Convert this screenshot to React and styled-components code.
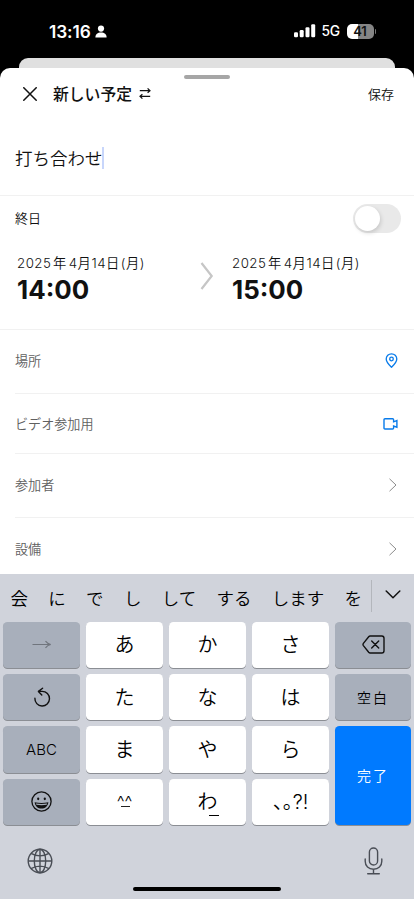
import React, { useState } from "react";
import styled, { createGlobalStyle } from "styled-components";

const candidates = ["会", "に", "で", "し", "して", "する", "します", "を"];

function App() {
  const [allDay, setAllDay] = useState(false);

  return (
    <Screen lang="ja">
      <GlobalStyle />
      <StatusBar>
        <Clock>13:16</Clock>
        <PersonIcon />
        <StatusRight>
          <SignalIcon />
          <Network>5G</Network>
          <Battery>
            <span>41</span>
          </Battery>
          <BatteryTip />
        </StatusRight>
      </StatusBar>
      <BackSheet />
      <Sheet>
        <Grabber />
        <Header>
          <CloseIcon />
          <Title>新しい予定</Title>
          <SwapIcon />
          <SaveBtn>保存</SaveBtn>
        </Header>
        <Subject>
          <span>打ち合わせ</span>
          <Caret />
        </Subject>
        <AllDay>
          <span>終日</span>
          <Toggle $on={allDay} onClick={() => setAllDay(!allDay)} />
        </AllDay>
        <Period>
          <DateTime date="2025年4月14日(月)" time="14:00" />
          <PeriodArrow />
          <DateTime date="2025年4月14日(月)" time="15:00" />
        </Period>
        <Field $height={64}>
          <span>場所</span>
          <PinIcon />
        </Field>
        <Field $height={60} $center>
          <span>ビデオ参加用</span>
          <VideoIcon />
        </Field>
        <Field $height={64}>
          <span>参加者</span>
          <ChevronIcon />
        </Field>
        <Field $height={64}>
          <span>設備</span>
          <ChevronIcon />
        </Field>
      </Sheet>
      <Keyboard>
        <CandidateBar>
          <Candidates>
            {candidates.map((word) => (
              <Candidate key={word}>{word}</Candidate>
            ))}
          </Candidates>
          <ExpandBtn>
            <DownIcon />
          </ExpandBtn>
        </CandidateBar>
        <Keys>
          <FnKey>
            <ArrowIcon />
          </FnKey>
          <Key>あ</Key>
          <Key>か</Key>
          <Key>さ</Key>
          <FnKey>
            <DeleteIcon />
          </FnKey>
          <FnKey>
            <UndoIcon />
          </FnKey>
          <Key>た</Key>
          <Key>な</Key>
          <Key>は</Key>
          <FnKey $spacing="2px">空白</FnKey>
          <FnKey>ABC</FnKey>
          <Key>ま</Key>
          <Key>や</Key>
          <Key>ら</Key>
          <DoneKey $spacing="2px">完了</DoneKey>
          <FnKey>
            <SmileIcon />
          </FnKey>
          <Key>
            <Kaomoji>^^</Kaomoji>
          </Key>
          <Key>
            <Wa>わ</Wa>
          </Key>
          <Key>
            <Marks>、。?!</Marks>
          </Key>
        </Keys>
        <KeyboardFooter>
          <GlobeIcon />
          <MicIcon />
        </KeyboardFooter>
        <HomeIndicator />
      </Keyboard>
    </Screen>
  );
}

function DateTime({ date, time }) {
  const parts = date.split(/(年)/);
  return (
    <DateBox>
      <DateText>
        {parts[0]}
        <Year>{parts[1]}</Year>
        {parts[2].replace("(月)", "")}
        <Weekday>(月)</Weekday>
      </DateText>
      <TimeText>{time}</TimeText>
    </DateBox>
  );
}

const PersonIcon = () => (
  <svg width="12" height="13" viewBox="0 0 12 13" fill="#fff">
    <circle cx="6" cy="3.6" r="3.1" />
    <path d="M0.4 12.4C0.4 9.2 2.6 7.4 6 7.4S11.6 9.2 11.6 12.4Z" />
  </svg>
);

const SignalIcon = () => (
  <svg width="22" height="14" viewBox="0 0 22 14" fill="#fff">
    <rect x="0" y="8.3" width="4" height="5" rx="1.2" />
    <rect x="5.7" y="6" width="4" height="7.3" rx="1.2" />
    <rect x="11.5" y="3.3" width="4" height="10" rx="1.2" />
    <rect x="17.2" y="0.3" width="4" height="13" rx="1.2" />
  </svg>
);

const CloseIcon = () => (
  <svg width="14" height="14" viewBox="0 0 14 14" stroke="#111" strokeWidth="1.5">
    <path d="M0.3 0.3L13.7 13.7M13.7 0.3L0.3 13.7" />
  </svg>
);

const SwapIcon = () => (
  <svg width="12" height="11" viewBox="0 0 12 11" fill="none" stroke="#111" strokeWidth="1.2">
    <path d="M0.8 2.7H10.8M8.6 0.4L11 2.7L8.6 4.8M11.2 8.3H1.2M3.4 6.2L1 8.3L3.4 10.6" />
  </svg>
);

const PeriodArrow = () => (
  <svg width="14" height="30" viewBox="0 0 14 30" fill="none" stroke="#c6c6c6" strokeWidth="2.2">
    <path d="M1.5 2L11.7 15L1.5 28" />
  </svg>
);

const PinIcon = () => (
  <svg width="13" height="15" viewBox="0 0 13 15" fill="none" stroke="#087bea" strokeWidth="1.3">
    <path d="M6.5 14.2C4.8 12.6 1.2 9.4 1.2 6A5.3 5.2 0 0 1 11.8 6C11.8 9.4 8.2 12.6 6.5 14.2Z" />
    <circle cx="6.5" cy="6" r="1.8" />
  </svg>
);

const VideoIcon = () => (
  <svg width="15" height="12" viewBox="0 0 15 12" fill="none" stroke="#087bea" strokeWidth="1.4">
    <path d="M2 0.8H9.6Q10.6 0.8 10.6 1.8V3.8L13.9 2.6V9.2L10.6 8V10Q10.6 11 9.6 11H2Q1 11 1 10V1.8Q1 0.8 2 0.8Z" />
  </svg>
);

const ChevronIcon = () => (
  <svg width="9" height="14" viewBox="0 0 9 14" fill="none" stroke="#8c8c8c" strokeWidth="1">
    <path d="M0.5 0.8L7 7L0.5 13.2" />
  </svg>
);

const DownIcon = () => (
  <svg width="16" height="9" viewBox="0 0 16 9" fill="none" stroke="#111" strokeWidth="1.5" strokeLinecap="round" strokeLinejoin="round">
    <path d="M1.2 1L8 7.7L14.8 1" />
  </svg>
);

const ArrowIcon = () => (
  <svg width="20" height="9" viewBox="0 0 20 9" fill="none" stroke="#70757d" strokeWidth="1.2">
    <path d="M0.5 4.5H18.5M13.5 1.2Q15.5 3.8 18.7 4.5Q15.5 5.2 13.5 7.8" />
  </svg>
);

const DeleteIcon = () => (
  <svg width="23" height="19" viewBox="0 0 23 19" fill="none" stroke="#111" strokeWidth="1.4" strokeLinecap="round" strokeLinejoin="round">
    <path d="M8.1 1H19.8Q22 1 22 3.2V15.8Q22 18 19.8 18H8.1Q7.3 18 6.7 17.3L1.4 10.6Q0.6 9.5 1.4 8.4L6.7 1.7Q7.3 1 8.1 1Z" />
    <path d="M9.7 6L16.7 13M16.7 6L9.7 13" />
  </svg>
);

const UndoIcon = () => (
  <svg width="18" height="20" viewBox="0 0 18 20" fill="none" stroke="#111" strokeWidth="1.4" strokeLinecap="round" strokeLinejoin="round">
    <path d="M1.9 11.3A7.3 7.3 0 1 0 9.2 4.4H5.6M9.6 1.2L5.4 4.4L8.8 8" />
  </svg>
);

const SmileIcon = () => (
  <svg width="21" height="21" viewBox="0 0 21 21" fill="none" stroke="#111" strokeWidth="1.3">
    <circle cx="10.5" cy="10.5" r="9.6" />
    <ellipse cx="7.2" cy="7.8" rx="1.1" ry="1.4" fill="#111" stroke="none" />
    <ellipse cx="13.8" cy="7.8" rx="1.1" ry="1.4" fill="#111" stroke="none" />
    <path d="M3.6 11.3Q10.5 12.5 17.4 11.3C16.8 15.4 14 17.6 10.5 17.6S4.2 15.4 3.6 11.3Z" fill="#111" stroke="none" />
    <path d="M4.9 12.5Q10.5 13.4 16.1 12.5L15.6 13.7Q10.5 14.6 5.4 13.7Z" fill="#a8afbb" stroke="none" />
  </svg>
);

const GlobeIcon = () => (
  <svg width="26" height="26" viewBox="0 0 26 26" fill="none" stroke="#494d55" strokeWidth="1.4">
    <circle cx="13" cy="13" r="11.8" />
    <ellipse cx="13" cy="13" rx="5.7" ry="11.8" />
    <path d="M13 1.2V24.8M1.2 13H24.8M4 5.4Q13 10.4 22 5.4M4 20.6Q13 15.6 22 20.6" />
  </svg>
);

const MicIcon = () => (
  <svg width="19" height="28" viewBox="0 0 19 28" fill="none" stroke="#494d55" strokeWidth="1.4" strokeLinecap="round">
    <rect x="5.4" y="1" width="8.2" height="17" rx="4.1" />
    <path d="M1.2 12V14.2C1.2 19 4.6 22.2 9.5 22.2S17.8 19 17.8 14.2V12M9.5 22.2V26.8M3.7 26.8H15.3" />
  </svg>
);

export default App;

const GlobalStyle = createGlobalStyle`
  * {
    box-sizing: border-box;
  }
  body {
    margin: 0;
    background: #000;
    font-family: Inter, "Noto Sans CJK JP", sans-serif;
  }
  svg {
    display: block;
    flex-shrink: 0;
  }
`;

const Screen = styled.div`
  width: 414px;
  height: 899px;
  overflow: hidden;
  display: flex;
  flex-direction: column;
  background: #000;
`;

const StatusBar = styled.div`
  height: 58px;
  padding: 4px 38px 0 49px;
  display: flex;
  align-items: center;
  flex-shrink: 0;
  color: #fff;
  > svg {
    margin-left: 5px;
  }
`;

const Clock = styled.span`
  width: 41px;
  font-size: 17.3px;
  font-weight: 600;
  letter-spacing: -0.1px;
  white-space: nowrap;
`;

const StatusRight = styled.div`
  display: flex;
  align-items: center;
  margin-left: auto;
`;

const Network = styled.span`
  margin: 0 6px 0 6px;
  width: 19px;
  font-size: 13.8px;
  font-weight: 450;
  letter-spacing: -0.2px;
`;

const Battery = styled.div`
  width: 27px;
  height: 15px;
  border-radius: 5px;
  background: linear-gradient(90deg, #fff 42%, #858585 42%);
  display: flex;
  align-items: center;
  justify-content: center;
  color: #111;
  font-size: 13px;
  font-weight: 600;
`;

const BatteryTip = styled.div`
  width: 1.5px;
  height: 5px;
  margin-left: 1px;
  border-radius: 0 2px 2px 0;
  background: #777;
`;

const BackSheet = styled.div`
  height: 20px;
  margin: 0 19px -10.5px;
  flex-shrink: 0;
  border-radius: 9px 9px 0 0;
  background: #e0e0e0;
`;

const Sheet = styled.div`
  height: 506px;
  flex-shrink: 0;
  border-radius: 10px 10px 0 0;
  background: #fff;
  position: relative;
  color: #111;
  font-weight: 350;
`;

const Grabber = styled.div`
  width: 46px;
  height: 4px;
  margin: 0 auto;
  border-radius: 2px;
  background: #a6a6a6;
  position: relative;
  top: 7.5px;
`;

const Header = styled.div`
  height: 44px;
  padding: 0 20px 0 23px;
  display: flex;
  align-items: center;
`;

const Title = styled.div`
  margin: -1px 7px 0 16px;
  font-size: 15.8px;
  font-weight: 500;
`;

const SaveBtn = styled.div`
  margin: -1px 0 0 auto;
  font-size: 13px;
  font-weight: 350;
`;

const Subject = styled.div`
  height: 80.5px;
  padding: 5px 15px 0;
  display: flex;
  align-items: center;
  border-bottom: 1px solid #f1f1f1;
  font-size: 17.5px;
`;

const Caret = styled.div`
  width: 2px;
  height: 22px;
  margin-left: -0.5px;
  background: #c8d6fb;
`;

const AllDay = styled.div`
  height: 45px;
  padding: 0 13px 0 15px;
  display: flex;
  align-items: center;
  justify-content: space-between;
  font-size: 13px;
  span {
    margin-top: -2px;
  }
`;

const Toggle = styled.button`
  width: 48px;
  height: 29px;
  padding: 2px;
  border: none;
  border-radius: 15px;
  background: ${(props) => (props.$on ? "#34c759" : "#e9e9e9")};
  &::after {
    content: "";
    display: block;
    width: 25px;
    height: 25px;
    margin-left: ${(props) => (props.$on ? "19px" : "0")};
    border-radius: 50%;
    background: #fff;
    box-shadow: 1px 2px 4px rgba(0, 0, 0, 0.15);
  }
`;

const Period = styled.div`
  height: 89px;
  padding: 12px 17px 0;
  display: flex;
  border-bottom: 1px solid #f1f1f1;
  svg {
    margin: 8px 18px 0 2px;
  }
`;

const DateBox = styled.div`
  width: 181px;
  flex-shrink: 0;
`;

const DateText = styled.div`
  height: 20px;
  line-height: 21px;
  font-size: 13.3px;
  letter-spacing: 0.5px;
  white-space: nowrap;
`;

const Year = styled.span`
  margin: 0 2px 0 1.5px;
`;

const Weekday = styled.span`
  margin-left: 1px;
`;

const TimeText = styled.div`
  line-height: 34px;
  font-size: 25.9px;
  font-weight: 700;
`;

const Field = styled.div`
  height: ${(props) => props.$height}px;
  margin-left: 15px;
  padding-right: 16px;
  padding-bottom: ${(props) => (props.$center ? "0" : "1.5px")};
  display: flex;
  align-items: center;
  justify-content: space-between;
  border-bottom: 1px solid #f1f1f1;
  color: #606060;
  font-size: 13.1px;
`;

const Keyboard = styled.div`
  flex: 1;
  background: #d0d3db;
  position: relative;
`;

const CandidateBar = styled.div`
  height: 48px;
  display: flex;
  align-items: center;
`;

const Candidates = styled.div`
  width: 371px;
  padding-left: 10.5px;
  display: flex;
  gap: 20.3px;
`;

const Candidate = styled.span`
  font-size: 17.5px;
  font-weight: 350;
  white-space: nowrap;
  color: #000;
`;

const ExpandBtn = styled.div`
  width: 43px;
  height: 32px;
  margin-top: -4px;
  padding-bottom: 2px;
  display: flex;
  justify-content: center;
  align-items: center;
  border-left: 1px solid #b3b6bc;
  flex-shrink: 0;
`;

const Keys = styled.div`
  height: 203.5px;
  padding: 0 3px;
  display: grid;
  grid-template-columns: repeat(4, 77px) 1fr;
  grid-template-rows: repeat(4, 1fr);
  gap: 6px;
`;

const Key = styled.div`
  min-width: 0;
  border-radius: 4.5px;
  background: #fff;
  box-shadow: 0 1px 0 #8b8e94;
  display: flex;
  align-items: center;
  justify-content: center;
  padding-bottom: 2px;
  color: #000;
  font-size: 20px;
  font-weight: 350;
`;

const FnKey = styled(Key)`
  background: #a8afbb;
  padding-bottom: 0;
  font-size: ${(props) => (props.$spacing ? "14px" : "15px")};
  letter-spacing: ${(props) => props.$spacing || "0"};
`;

const DoneKey = styled(FnKey)`
  grid-column: 5;
  grid-row: 3 / 5;
  background: #007aff;
  color: #fff;
  padding-bottom: 2px;
`;

const Kaomoji = styled.span`
  position: relative;
  top: 1px;
  font-size: 17.5px;
  &::after {
    content: "";
    position: absolute;
    left: 4px;
    bottom: 5px;
    width: 9px;
    height: 1px;
    background: #222;
  }
`;

const Wa = styled.span`
  position: relative;
  &::after {
    content: "";
    position: absolute;
    left: 11px;
    bottom: -1px;
    width: 10px;
    height: 1px;
    background: #000;
  }
`;

const Marks = styled.span`
  font-feature-settings: "halt";
`;

const KeyboardFooter = styled.div`
  height: 71px;
  padding: 0 31px 0 27px;
  display: flex;
  align-items: center;
  justify-content: space-between;
`;

const HomeIndicator = styled.div`
  width: 148px;
  height: 4.5px;
  margin: -9.5px auto 0;
  border-radius: 3px;
  background: #000;
`;
